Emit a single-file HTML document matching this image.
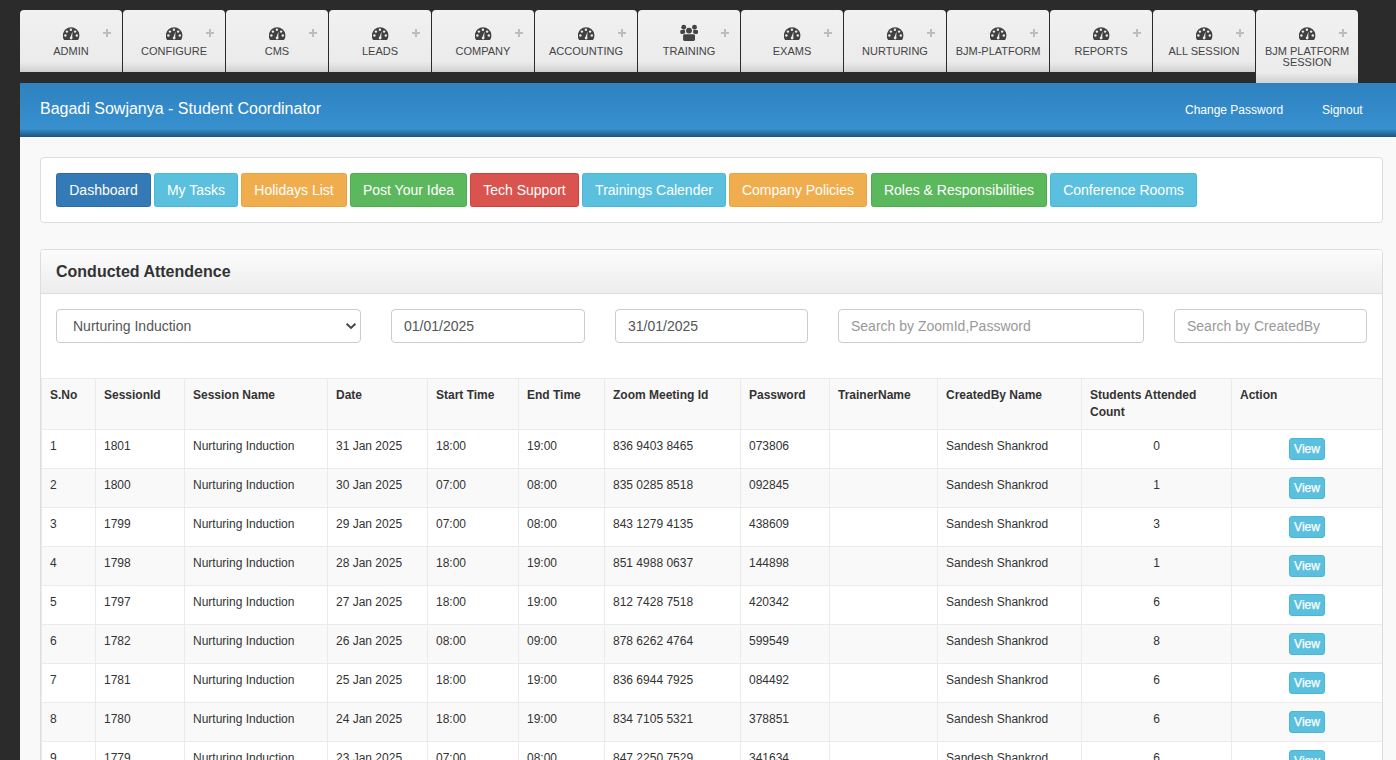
<!DOCTYPE html>
<html><head><meta charset="utf-8">
<style>
*{box-sizing:border-box;margin:0;padding:0}
html,body{width:1396px;height:760px;overflow:hidden;background:#2b2b2b;font-family:"Liberation Sans",sans-serif;color:#333}
.tabs{position:absolute;left:20px;top:10px;height:73px;width:1376px}
.tab{position:absolute;top:0;width:102px;height:62px;border-radius:4px 4px 0 0;
 background:linear-gradient(to bottom,#f1f1f1 0,#ebebeb 84%,#d0d0d0 100%);
 text-align:center;color:#444;font-size:11px;line-height:11px}
.tab.active{height:73px;background:linear-gradient(to bottom,#f1f1f1 0,#ebebeb 86%,#d0d0d0 100%)}
.tab svg.ic{position:absolute;left:43px;top:17px}
.tab .plus{position:absolute;right:11px;top:19px;width:8px;height:8px}
.tab .plus:before{content:"";position:absolute;left:3px;top:0;width:2px;height:8px;background:#bdbdbd}
.tab .plus:after{content:"";position:absolute;left:0;top:3px;width:8px;height:2px;background:#bdbdbd}
.tab .lbl{position:absolute;left:0;right:0;top:36px}
.hdr{position:absolute;left:20px;top:83px;width:1376px;height:54px;
 background:linear-gradient(to bottom,#2d82bf 0,#3890cf 85%,#3082bb 88%,#1d5482 100%);color:#fff}
.hdr .ttl{position:absolute;left:40px;top:16px;font-size:16px;line-height:20px;left:20px}
.hdr .lk{position:absolute;top:19px;font-size:12px;line-height:17px}
.content{position:absolute;left:20px;top:137px;width:1376px;height:623px;background:#f9f9f9}
.btnpanel{position:absolute;left:20px;top:20px;width:1343px;height:66px;background:#fff;border:1px solid #ddd;border-radius:4px;padding:15px 15px;white-space:nowrap;font-size:0}
.btn{position:absolute;top:15px;height:34px;padding:0;text-align:center;font-size:14px;line-height:32px;color:#fff;border:1px solid transparent;border-radius:2.5px}
.b-p{background:#337ab7;border-color:#2e6da4}
.b-i{background:#5bc0de;border-color:#46b8da}
.b-w{background:#f0ad4e;border-color:#eea236}
.b-s{background:#5cb85c;border-color:#4cae4c}
.b-d{background:#d9534f;border-color:#d43f3a}
.panel{position:absolute;left:20px;top:112px;width:1343px;height:600px;background:#fff;border:1px solid #ddd;border-radius:4px;overflow:hidden}
.ph{height:44px;border-bottom:1px solid #ddd;background:linear-gradient(to bottom,#fcfcfc 0,#ededed 100%);padding:0 15px;font-size:16px;font-weight:bold;line-height:43px;color:#333}
.fc{position:absolute;top:59px;height:34px;border:1px solid #ccc;border-radius:4px;background:#fff;font-size:14px;line-height:32px;padding:0 12px;color:#555}
.fc.ph2{color:#999}
table{position:absolute;left:0;top:128px;border-collapse:collapse;table-layout:fixed;width:1341px;font-size:12px;line-height:17px}
td,th{border:1px solid #ebebeb;padding:8px;vertical-align:top;text-align:left}
th{font-weight:bold}
tr:nth-child(odd){background:#f9f9f9}
tr:nth-child(even){background:#fff}
td.c{text-align:center}
.vbtn{display:inline-block;height:22px;padding:0 4.5px;border:1px solid #46b8da;background:#5bc0de;color:#fff;border-radius:3px;font-size:12px;line-height:20px;-webkit-text-stroke:0.25px #fff}
</style></head><body>
<div class="tabs" id="tabs"><div class="tab" style="left:0px"><svg class="ic" width="17" height="14" viewBox="0 0 17 14"><path d="M1.2 13.1A8.3 8.3 0 1 1 15 13.1Z" fill="#414141"/><g fill="#ececec"><circle cx="7.9" cy="2.7" r="1.2"/><circle cx="3.9" cy="4.6" r="1.2"/><circle cx="12.1" cy="4.6" r="1.2"/><circle cx="2.4" cy="8.5" r="1.2"/><circle cx="13.8" cy="8.5" r="1.2"/><circle cx="8.1" cy="11.1" r="1.35"/><path d="M7.1 11L9.5 4.4L9.2 11.4Z"/></g></svg><span class="plus"></span><div class="lbl">ADMIN</div></div>
<div class="tab" style="left:103px"><svg class="ic" width="17" height="14" viewBox="0 0 17 14"><path d="M1.2 13.1A8.3 8.3 0 1 1 15 13.1Z" fill="#414141"/><g fill="#ececec"><circle cx="7.9" cy="2.7" r="1.2"/><circle cx="3.9" cy="4.6" r="1.2"/><circle cx="12.1" cy="4.6" r="1.2"/><circle cx="2.4" cy="8.5" r="1.2"/><circle cx="13.8" cy="8.5" r="1.2"/><circle cx="8.1" cy="11.1" r="1.35"/><path d="M7.1 11L9.5 4.4L9.2 11.4Z"/></g></svg><span class="plus"></span><div class="lbl">CONFIGURE</div></div>
<div class="tab" style="left:206px"><svg class="ic" width="17" height="14" viewBox="0 0 17 14"><path d="M1.2 13.1A8.3 8.3 0 1 1 15 13.1Z" fill="#414141"/><g fill="#ececec"><circle cx="7.9" cy="2.7" r="1.2"/><circle cx="3.9" cy="4.6" r="1.2"/><circle cx="12.1" cy="4.6" r="1.2"/><circle cx="2.4" cy="8.5" r="1.2"/><circle cx="13.8" cy="8.5" r="1.2"/><circle cx="8.1" cy="11.1" r="1.35"/><path d="M7.1 11L9.5 4.4L9.2 11.4Z"/></g></svg><span class="plus"></span><div class="lbl">CMS</div></div>
<div class="tab" style="left:309px"><svg class="ic" width="17" height="14" viewBox="0 0 17 14"><path d="M1.2 13.1A8.3 8.3 0 1 1 15 13.1Z" fill="#414141"/><g fill="#ececec"><circle cx="7.9" cy="2.7" r="1.2"/><circle cx="3.9" cy="4.6" r="1.2"/><circle cx="12.1" cy="4.6" r="1.2"/><circle cx="2.4" cy="8.5" r="1.2"/><circle cx="13.8" cy="8.5" r="1.2"/><circle cx="8.1" cy="11.1" r="1.35"/><path d="M7.1 11L9.5 4.4L9.2 11.4Z"/></g></svg><span class="plus"></span><div class="lbl">LEADS</div></div>
<div class="tab" style="left:412px"><svg class="ic" width="17" height="14" viewBox="0 0 17 14"><path d="M1.2 13.1A8.3 8.3 0 1 1 15 13.1Z" fill="#414141"/><g fill="#ececec"><circle cx="7.9" cy="2.7" r="1.2"/><circle cx="3.9" cy="4.6" r="1.2"/><circle cx="12.1" cy="4.6" r="1.2"/><circle cx="2.4" cy="8.5" r="1.2"/><circle cx="13.8" cy="8.5" r="1.2"/><circle cx="8.1" cy="11.1" r="1.35"/><path d="M7.1 11L9.5 4.4L9.2 11.4Z"/></g></svg><span class="plus"></span><div class="lbl">COMPANY</div></div>
<div class="tab" style="left:515px"><svg class="ic" width="17" height="14" viewBox="0 0 17 14"><path d="M1.2 13.1A8.3 8.3 0 1 1 15 13.1Z" fill="#414141"/><g fill="#ececec"><circle cx="7.9" cy="2.7" r="1.2"/><circle cx="3.9" cy="4.6" r="1.2"/><circle cx="12.1" cy="4.6" r="1.2"/><circle cx="2.4" cy="8.5" r="1.2"/><circle cx="13.8" cy="8.5" r="1.2"/><circle cx="8.1" cy="11.1" r="1.35"/><path d="M7.1 11L9.5 4.4L9.2 11.4Z"/></g></svg><span class="plus"></span><div class="lbl">ACCOUNTING</div></div>
<div class="tab" style="left:618px"><svg class="ic" width="19" height="18" viewBox="0 0 19 18" style="left:42px;top:14px"><g fill="#444"><circle cx="3.75" cy="3.3" r="2.45"/><circle cx="14.5" cy="3.3" r="2.45"/><rect x="0.3" y="6" width="4.9" height="3.9" rx="1.1"/><rect x="13.1" y="6" width="4.9" height="3.9" rx="1.1"/></g><g fill="#ececec"><circle cx="9" cy="6.6" r="3.7"/><rect x="2.3" y="9.5" width="13.5" height="8.3" rx="2"/></g><g fill="#444"><circle cx="9" cy="6.6" r="2.95"/><rect x="3.1" y="10.2" width="11.9" height="6.8" rx="1.4"/></g></svg><span class="plus"></span><div class="lbl">TRAINING</div></div>
<div class="tab" style="left:721px"><svg class="ic" width="17" height="14" viewBox="0 0 17 14"><path d="M1.2 13.1A8.3 8.3 0 1 1 15 13.1Z" fill="#414141"/><g fill="#ececec"><circle cx="7.9" cy="2.7" r="1.2"/><circle cx="3.9" cy="4.6" r="1.2"/><circle cx="12.1" cy="4.6" r="1.2"/><circle cx="2.4" cy="8.5" r="1.2"/><circle cx="13.8" cy="8.5" r="1.2"/><circle cx="8.1" cy="11.1" r="1.35"/><path d="M7.1 11L9.5 4.4L9.2 11.4Z"/></g></svg><span class="plus"></span><div class="lbl">EXAMS</div></div>
<div class="tab" style="left:824px"><svg class="ic" width="17" height="14" viewBox="0 0 17 14"><path d="M1.2 13.1A8.3 8.3 0 1 1 15 13.1Z" fill="#414141"/><g fill="#ececec"><circle cx="7.9" cy="2.7" r="1.2"/><circle cx="3.9" cy="4.6" r="1.2"/><circle cx="12.1" cy="4.6" r="1.2"/><circle cx="2.4" cy="8.5" r="1.2"/><circle cx="13.8" cy="8.5" r="1.2"/><circle cx="8.1" cy="11.1" r="1.35"/><path d="M7.1 11L9.5 4.4L9.2 11.4Z"/></g></svg><span class="plus"></span><div class="lbl">NURTURING</div></div>
<div class="tab" style="left:927px"><svg class="ic" width="17" height="14" viewBox="0 0 17 14"><path d="M1.2 13.1A8.3 8.3 0 1 1 15 13.1Z" fill="#414141"/><g fill="#ececec"><circle cx="7.9" cy="2.7" r="1.2"/><circle cx="3.9" cy="4.6" r="1.2"/><circle cx="12.1" cy="4.6" r="1.2"/><circle cx="2.4" cy="8.5" r="1.2"/><circle cx="13.8" cy="8.5" r="1.2"/><circle cx="8.1" cy="11.1" r="1.35"/><path d="M7.1 11L9.5 4.4L9.2 11.4Z"/></g></svg><span class="plus"></span><div class="lbl">BJM-PLATFORM</div></div>
<div class="tab" style="left:1030px"><svg class="ic" width="17" height="14" viewBox="0 0 17 14"><path d="M1.2 13.1A8.3 8.3 0 1 1 15 13.1Z" fill="#414141"/><g fill="#ececec"><circle cx="7.9" cy="2.7" r="1.2"/><circle cx="3.9" cy="4.6" r="1.2"/><circle cx="12.1" cy="4.6" r="1.2"/><circle cx="2.4" cy="8.5" r="1.2"/><circle cx="13.8" cy="8.5" r="1.2"/><circle cx="8.1" cy="11.1" r="1.35"/><path d="M7.1 11L9.5 4.4L9.2 11.4Z"/></g></svg><span class="plus"></span><div class="lbl">REPORTS</div></div>
<div class="tab" style="left:1133px"><svg class="ic" width="17" height="14" viewBox="0 0 17 14"><path d="M1.2 13.1A8.3 8.3 0 1 1 15 13.1Z" fill="#414141"/><g fill="#ececec"><circle cx="7.9" cy="2.7" r="1.2"/><circle cx="3.9" cy="4.6" r="1.2"/><circle cx="12.1" cy="4.6" r="1.2"/><circle cx="2.4" cy="8.5" r="1.2"/><circle cx="13.8" cy="8.5" r="1.2"/><circle cx="8.1" cy="11.1" r="1.35"/><path d="M7.1 11L9.5 4.4L9.2 11.4Z"/></g></svg><span class="plus"></span><div class="lbl">ALL SESSION</div></div>
<div class="tab active" style="left:1236px"><svg class="ic" width="17" height="14" viewBox="0 0 17 14"><path d="M1.2 13.1A8.3 8.3 0 1 1 15 13.1Z" fill="#414141"/><g fill="#ececec"><circle cx="7.9" cy="2.7" r="1.2"/><circle cx="3.9" cy="4.6" r="1.2"/><circle cx="12.1" cy="4.6" r="1.2"/><circle cx="2.4" cy="8.5" r="1.2"/><circle cx="13.8" cy="8.5" r="1.2"/><circle cx="8.1" cy="11.1" r="1.35"/><path d="M7.1 11L9.5 4.4L9.2 11.4Z"/></g></svg><span class="plus"></span><div class="lbl">BJM PLATFORM<br>SESSION</div></div></div>
<div class="hdr"><div class="ttl">Bagadi Sowjanya - Student Coordinator</div>
<div class="lk" style="left:1165px">Change Password</div><div class="lk" style="left:1302px">Signout</div></div>
<div class="content">
<div class="btnpanel"><span class="btn b-p" style="left:15px;width:95px">Dashboard</span><span class="btn b-i" style="left:113px;width:84px">My Tasks</span><span class="btn b-w" style="left:200px;width:106px">Holidays List</span><span class="btn b-s" style="left:309px;width:117px">Post Your Idea</span><span class="btn b-d" style="left:429px;width:109px">Tech Support</span><span class="btn b-i" style="left:541px;width:144px">Trainings Calender</span><span class="btn b-w" style="left:688px;width:138px">Company Policies</span><span class="btn b-s" style="left:830px;width:176px">Roles &amp; Responsibilities</span><span class="btn b-i" style="left:1009px;width:147px">Conference Rooms</span></div>
<div class="panel">
<div class="ph">Conducted Attendence</div>
<div class="fc" style="left:15px;width:305px;padding-left:16px">Nurturing Induction<svg style="position:absolute;left:288px;top:11px" width="12" height="10" viewBox="0 0 12 10"><path d="M1.6 2.8L6.05 6.9L10.4 2.8" fill="none" stroke="#484848" stroke-width="2.1"/></svg></div>
<div class="fc" style="left:350px;width:194px">01/01/2025</div>
<div class="fc" style="left:574px;width:193px">31/01/2025</div>
<div class="fc ph2" style="left:797px;width:306px">Search by ZoomId,Password</div>
<div class="fc ph2" style="left:1133px;width:193px">Search by CreatedBy</div>
<table>
<colgroup><col style="width:54px"><col style="width:89px"><col style="width:143px"><col style="width:100px"><col style="width:91px"><col style="width:86px"><col style="width:136px"><col style="width:89px"><col style="width:108px"><col style="width:144px"><col style="width:150px"><col style="width:151px"></colgroup>
<tr><th>S.No</th><th>SessionId</th><th>Session Name</th><th>Date</th><th>Start Time</th><th>End Time</th><th>Zoom Meeting Id</th><th>Password</th><th>TrainerName</th><th>CreatedBy Name</th><th>Students Attended Count</th><th>Action</th></tr>
<tr><td>1</td><td>1801</td><td>Nurturing Induction</td><td>31 Jan 2025</td><td>18:00</td><td>19:00</td><td>836 9403 8465</td><td>073806</td><td></td><td>Sandesh Shankrod</td><td class="c">0</td><td class="c"><span class="vbtn">View</span></td></tr>
<tr><td>2</td><td>1800</td><td>Nurturing Induction</td><td>30 Jan 2025</td><td>07:00</td><td>08:00</td><td>835 0285 8518</td><td>092845</td><td></td><td>Sandesh Shankrod</td><td class="c">1</td><td class="c"><span class="vbtn">View</span></td></tr>
<tr><td>3</td><td>1799</td><td>Nurturing Induction</td><td>29 Jan 2025</td><td>07:00</td><td>08:00</td><td>843 1279 4135</td><td>438609</td><td></td><td>Sandesh Shankrod</td><td class="c">3</td><td class="c"><span class="vbtn">View</span></td></tr>
<tr><td>4</td><td>1798</td><td>Nurturing Induction</td><td>28 Jan 2025</td><td>18:00</td><td>19:00</td><td>851 4988 0637</td><td>144898</td><td></td><td>Sandesh Shankrod</td><td class="c">1</td><td class="c"><span class="vbtn">View</span></td></tr>
<tr><td>5</td><td>1797</td><td>Nurturing Induction</td><td>27 Jan 2025</td><td>18:00</td><td>19:00</td><td>812 7428 7518</td><td>420342</td><td></td><td>Sandesh Shankrod</td><td class="c">6</td><td class="c"><span class="vbtn">View</span></td></tr>
<tr><td>6</td><td>1782</td><td>Nurturing Induction</td><td>26 Jan 2025</td><td>08:00</td><td>09:00</td><td>878 6262 4764</td><td>599549</td><td></td><td>Sandesh Shankrod</td><td class="c">8</td><td class="c"><span class="vbtn">View</span></td></tr>
<tr><td>7</td><td>1781</td><td>Nurturing Induction</td><td>25 Jan 2025</td><td>18:00</td><td>19:00</td><td>836 6944 7925</td><td>084492</td><td></td><td>Sandesh Shankrod</td><td class="c">6</td><td class="c"><span class="vbtn">View</span></td></tr>
<tr><td>8</td><td>1780</td><td>Nurturing Induction</td><td>24 Jan 2025</td><td>18:00</td><td>19:00</td><td>834 7105 5321</td><td>378851</td><td></td><td>Sandesh Shankrod</td><td class="c">6</td><td class="c"><span class="vbtn">View</span></td></tr>
<tr><td>9</td><td>1779</td><td>Nurturing Induction</td><td>23 Jan 2025</td><td>07:00</td><td>08:00</td><td>847 2250 7529</td><td>341634</td><td></td><td>Sandesh Shankrod</td><td class="c">6</td><td class="c"><span class="vbtn">View</span></td></tr>
</table>
</div>
</div>
</body></html>
